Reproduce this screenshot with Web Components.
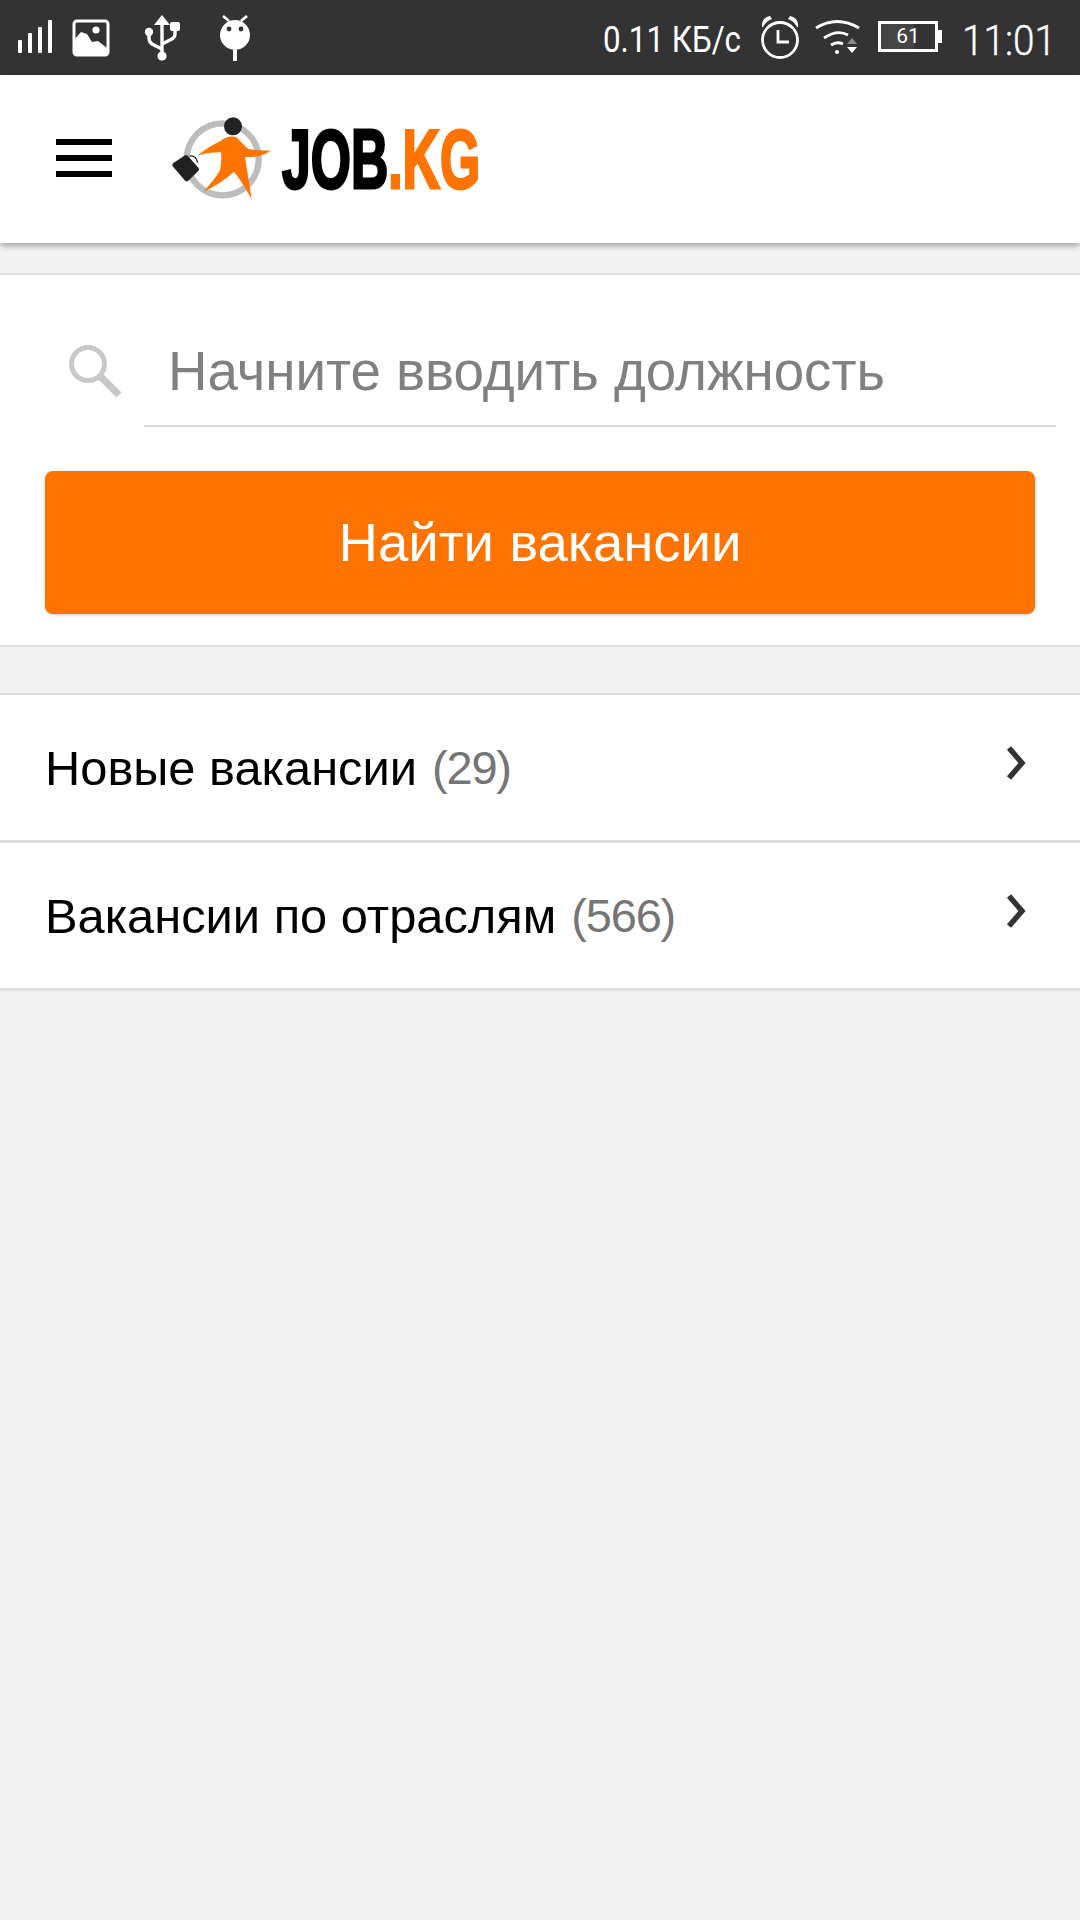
<!DOCTYPE html>
<html lang="ru">
<head>
<meta charset="utf-8">
<title>JOB.KG</title>
<style>
html,body{margin:0;padding:0;background:#f2f2f2;}
body{width:1080px;height:1920px;overflow:hidden;font-family:"Liberation Sans",Arial,sans-serif;}
</style>
</head>
<body>
<x-status-bar></x-status-bar>
<x-app-header></x-app-header>
<x-search-card placeholder="Начните вводить должность" action="Найти вакансии"></x-search-card>
<x-nav-list>
  <x-nav-row label="Новые вакансии" count="(29)"></x-nav-row>
  <x-nav-row label="Вакансии по отраслям" count="(566)"></x-nav-row>
</x-nav-list>
<script>
function def(name, html){
  customElements.define(name, class extends HTMLElement{
    connectedCallback(){
      if(this.shadowRoot) return;
      const r=this.attachShadow({mode:'open'});
      r.innerHTML=typeof html==='function'?html(this):html;
    }
  });
}
def('x-status-bar',`<style>
:host{display:flex;box-sizing:border-box;height:75px;background:#333;color:#fff;align-items:flex-start;font-family:Roboto,sans-serif;}
svg{display:block;flex:none;}
.grow{flex:1;}
.net{flex:none;font-size:36px;font-weight:400;line-height:80px;width:139px;white-space:nowrap;transform:scaleX(.87);transform-origin:left;}
.time{flex:none;font-size:43px;font-weight:300;-webkit-text-stroke:.4px #fff;line-height:81px;margin-left:24px;width:91px;white-space:nowrap;transform:scaleX(.9);transform-origin:left;}
.bat{position:relative;flex:none;box-sizing:border-box;margin-top:21px;margin-left:16px;width:60px;height:31px;border:3px solid #fff;background:linear-gradient(90deg,#444 0 62%,#333 62%);display:flex;align-items:center;justify-content:center;font-size:21px;font-weight:400;line-height:1;}
.bat::after{content:"";position:absolute;right:-7px;top:6px;width:4px;height:13px;background:#fff;}
</style>
<svg width="250" height="75" viewBox="0 0 250 75">
  <g fill="#fff"><rect x="18" y="40" width="4" height="13" rx="1"/><rect x="28" y="33" width="4" height="20" rx="1"/><rect x="38" y="27" width="4" height="26" rx="1"/><rect x="48" y="20" width="4" height="33" rx="1"/></g>
  <rect x="74" y="21" width="34" height="34" rx="3" fill="none" stroke="#fff" stroke-width="3"/>
  <path fill="#fff" d="M74 40 81 32 87 34 92 42 98 41 107 48V55H74Z"/><circle cx="96" cy="30" r="3.6" fill="#fff"/>
  <g fill="none" stroke="#fff" stroke-width="3.4"><path d="M162 22V54"/><path d="M149 34V38Q149 43 154 45L162 49"/><path d="M175 30V34Q175 38 170 40L162 44"/></g>
  <path fill="#fff" d="M162 15 170 25H154Z"/><circle cx="162" cy="56" r="4.6" fill="#fff"/><circle cx="149" cy="32" r="4.2" fill="#fff"/><rect x="170" y="22" width="10" height="9" rx="2" fill="#fff"/>
  <path d="M223 16 229 21M247 16 241 21" stroke="#fff" stroke-width="2.6" fill="none"/>
  <circle cx="235" cy="35" r="15" fill="#fff"/><circle cx="229" cy="29" r="2.4" fill="#333"/><circle cx="241" cy="29" r="2.4" fill="#333"/><rect x="233" y="50" width="4" height="11" fill="#fff"/>
</svg>
<span class="grow"></span>
<span class="net">0.11 КБ/с</span>
<svg width="52" height="75" viewBox="754 0 52 75" style="margin-left:12px">
  <circle cx="780" cy="40" r="17.5" fill="none" stroke="#fff" stroke-width="2.8"/>
  <path d="M778 30V42H789" fill="none" stroke="#fff" stroke-width="2.8"/>
  <path fill="#fff" d="M762 27Q761 18 770 16L772 19Q766 21 763 27ZM798 27Q799 18 790 16L788 19Q794 21 797 27Z"/>
</svg>
<svg width="50" height="75" viewBox="812 0 50 75" style="margin-left:6px">
  <g fill="none" stroke="#fff" stroke-width="2.8"><path d="M816 28Q837 15 859 28"/><path d="M824 38Q837 29 848 35"/><path d="M831 45Q837 41 843 44"/></g>
  <circle cx="837" cy="52" r="2" fill="#fff"/>
  <path fill="#888" d="M852 38 857 44H847Z"/><path fill="#fff" d="M847 47H857L852 53Z"/>
</svg>
<span class="bat">61</span>
<span class="time">11:01</span>
<span style="width:27px;flex:none"></span>`);

def('x-app-header',`<style>
:host{display:flex;position:relative;box-sizing:border-box;height:168px;background:#fff;align-items:center;box-shadow:0 2px 7px rgba(0,0,0,.4);}
.burger{flex:none;margin-left:56px;margin-top:-2px;width:56px;height:38px;display:flex;flex-direction:column;justify-content:space-between;}
.burger i{display:block;height:6px;background:#000;}
svg{flex:none;display:block;margin-left:58px;margin-top:-2px;}
.logo{flex:none;margin-left:7px;margin-top:-1px;font:bold 84px/84px "Liberation Sans",sans-serif;color:#000;-webkit-text-stroke:3px currentColor;transform:scaleX(.615);transform-origin:left center;white-space:nowrap;}
.logo b{color:#ff7300;}
</style>
<span class="burger"><i></i><i></i><i></i></span>
<svg width="105" height="95" viewBox="420 60 315 285">
  <circle cx="578" cy="205" r="108" fill="none" stroke="#bdbdbd" stroke-width="19"/>
  <path fill="#ff7300" d="M503 194Q530 170 572 150Q592 132 618 138Q640 160 655 174Q690 180 722 178Q700 200 645 198L665 325Q635 270 612 242Q570 280 520 302Q555 265 570 238Q576 210 573 184Q535 184 503 194Z"/>
  <circle cx="609" cy="106" r="27" fill="#222"/>
  <path fill="#222" stroke="#222" stroke-width="14" stroke-linejoin="round" d="M434 222 468 199 500 235 470 264Z"/>
  <path fill="none" stroke="#222" stroke-width="4" d="M480 195Q497 192 503 215"/>
</svg>
<span class="logo">JOB<b>.KG</b></span>`);

def('x-search-card',h=>`<style>
:host{display:block;box-sizing:border-box;margin-top:30px;height:374px;background:#fff;border-top:2px solid #dedede;border-bottom:2px solid #dedede;padding:0 24px 0 45px;}
.field{display:flex;height:152px;}
svg{flex:none;display:block;margin-left:22px;margin-top:68px;}
.input{flex:1;margin-left:21px;box-sizing:border-box;height:152px;border-bottom:2px solid #d9d9d9;padding:40px 0 0 24px;font-size:54.7px;line-height:113px;color:#808080;white-space:nowrap;}
.btn{box-sizing:border-box;margin-top:44px;width:990px;height:143px;background:#ff7300;border-radius:8px;box-shadow:0 1px 3px rgba(0,0,0,.22);color:#fff;font-size:54.5px;display:flex;align-items:center;justify-content:center;}
</style>
<div class="field">
  <svg width="56" height="56" viewBox="0 0 56 56"><circle cx="21" cy="21" r="16.5" fill="none" stroke="#c8c8c8" stroke-width="5"/><path d="M33 33 52 52" stroke="#c8c8c8" stroke-width="7" fill="none"/></svg>
  <div class="input">${h.getAttribute('placeholder')}</div>
</div>
<div class="btn">${h.getAttribute('action')}</div>`);

def('x-nav-list',`<style>
:host{display:block;margin-top:46px;background:#fff;border-top:2px solid #dedede;}
</style><slot></slot>`);

def('x-nav-row',h=>`<style>
:host{display:flex;box-sizing:border-box;height:148px;align-items:center;padding:0 0 0 45px;border-bottom:3px solid #dedede;font-size:48.8px;color:#000;white-space:nowrap;}
.c{color:#757575;margin-left:15px;font-size:47px;letter-spacing:-1.2px;}
.sp{flex:1;}
svg{flex:none;display:block;margin-right:52px;margin-top:-10px;}
</style>
<span>${h.getAttribute('label')}</span><span class="c">${h.getAttribute('count')}</span><span class="sp"></span>
<svg width="24" height="38" viewBox="0 0 24 38"><path d="M5 4 18 19 5 34" fill="none" stroke="#333" stroke-width="5.5"/></svg>`);
</script>
</body>
</html>
